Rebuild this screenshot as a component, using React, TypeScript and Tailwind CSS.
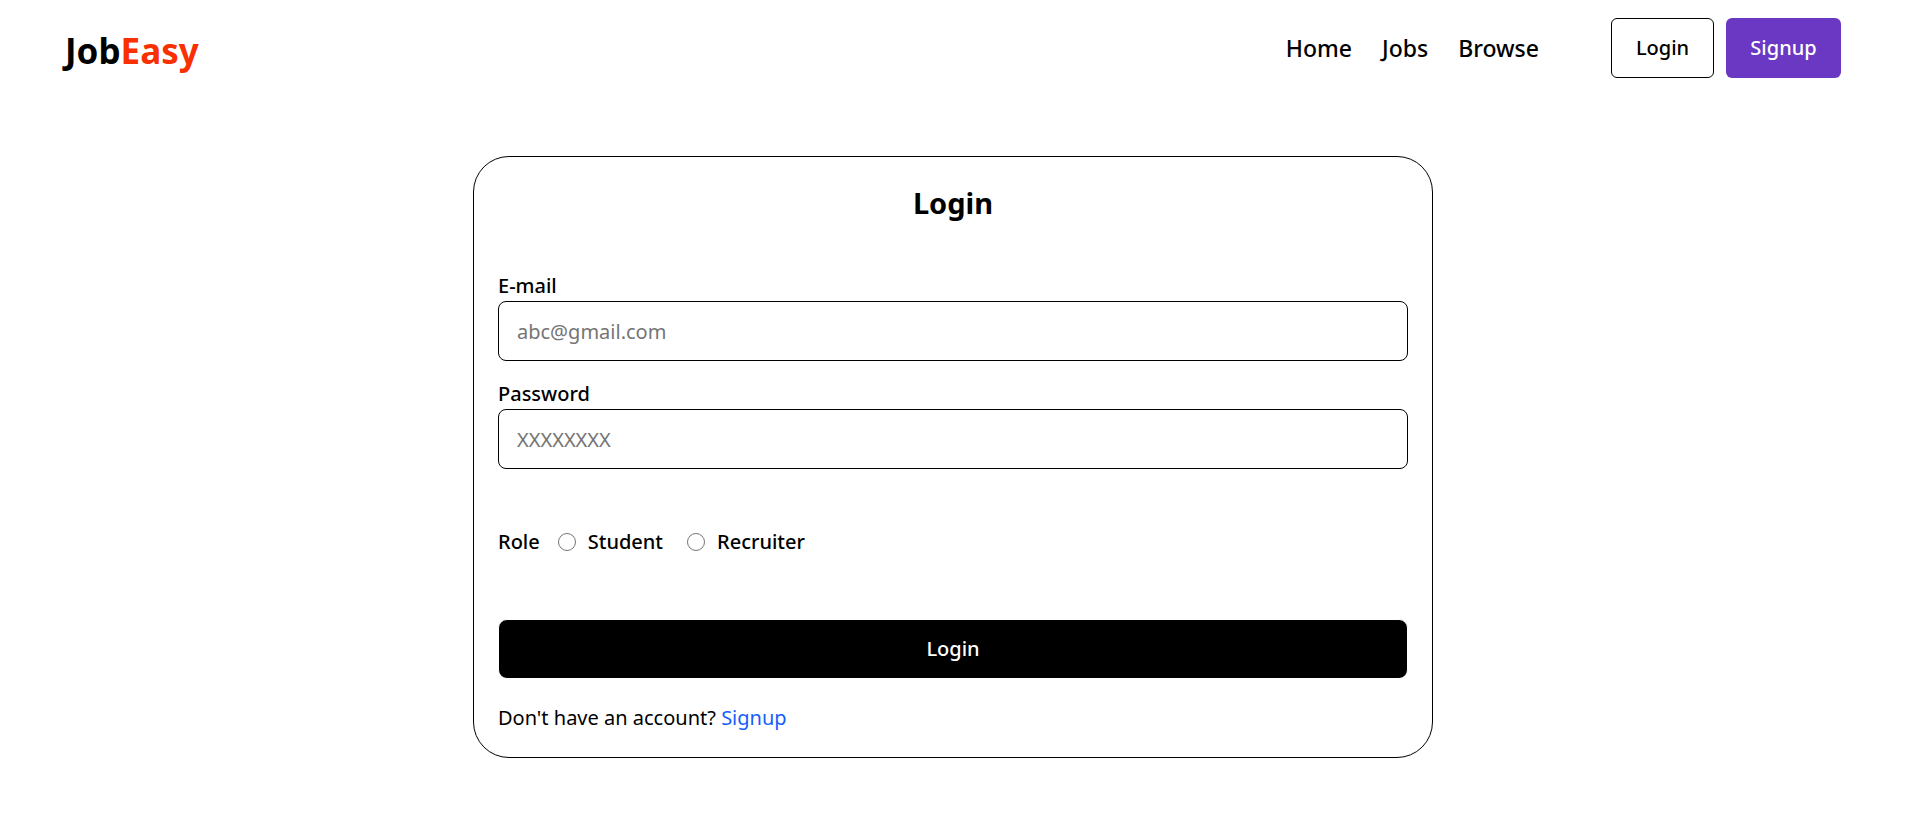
import { useState } from "react";

function Navbar() {
  return (
    <header className="flex items-end justify-between px-[65px] pt-[18px] pb-[18px]">
      <h1 className="text-[35px] leading-[54px] font-bold">
        Job<span className="text-[#f83002]">Easy</span>
      </h1>
      <div className="flex items-center gap-[72px]">
        <nav>
          <ul className="flex items-center gap-[30px] text-[23px] leading-[36px] font-[550]">
            <li><a href="#home">Home</a></li>
            <li><a href="#jobs">Jobs</a></li>
            <li><a href="#browse">Browse</a></li>
          </ul>
        </nav>
        <div className="flex items-center gap-3">
          <button type="button" className="h-[60px] w-[103px] rounded-md border border-black text-xl font-[550]">Login</button>
          <button type="button" className="h-[60px] w-[115px] rounded-md bg-[#6a38c2] text-xl font-[550] text-white">Signup</button>
        </div>
      </div>
    </header>
  );
}

const labelClass = "block text-xl leading-[30px] font-[550]";
const fieldClass =
  "block h-[60px] w-full rounded-lg border border-black px-[18px] text-xl placeholder:text-[#757575]";

export default function App() {
  const [role, setRole] = useState("");
  return (
    <div className="bg-white pr-[6px] font-['Noto_Sans',sans-serif] text-black">
      <Navbar />
      <main className="mx-auto mt-[60px] w-full max-w-[960px]">
        <form className="rounded-[36px] border border-black p-6" onSubmit={(e) => e.preventDefault()}>
          <h2 className="text-center text-[29px] leading-[44px] font-bold">Login</h2>
          <div className="mt-[46px]">
            <label htmlFor="email" className={labelClass}>E-mail</label>
            <input id="email" type="email" placeholder="abc@gmail.com" className={fieldClass} />
          </div>
          <div className="mt-[18px]">
            <label htmlFor="password" className={labelClass}>Password</label>
            <input id="password" type="password" placeholder="XXXXXXXX" className={fieldClass} />
          </div>
          <fieldset className="mt-[58px] flex items-center text-xl leading-[30px] font-[550]">
            <legend className="float-left mr-[18px]">Role</legend>
            {["Student", "Recruiter"].map((name) => (
              <label key={name} className="mr-6 flex items-center gap-3">
                <input type="radio" name="role" value={name} checked={role === name} onChange={() => setRole(name)} className="size-[18px]" />
                {name}
              </label>
            ))}
          </fieldset>
          <button type="submit" className="mt-[62px] block h-[60px] w-full rounded-[9px] border border-white bg-black text-xl font-[550] text-white">Login</button>
          <p className="mt-6 text-xl leading-[30px]">
            Don't have an account? <a href="#signup" className="text-[#155dfc]">Signup</a>
          </p>
        </form>
      </main>
    </div>
  );
}
